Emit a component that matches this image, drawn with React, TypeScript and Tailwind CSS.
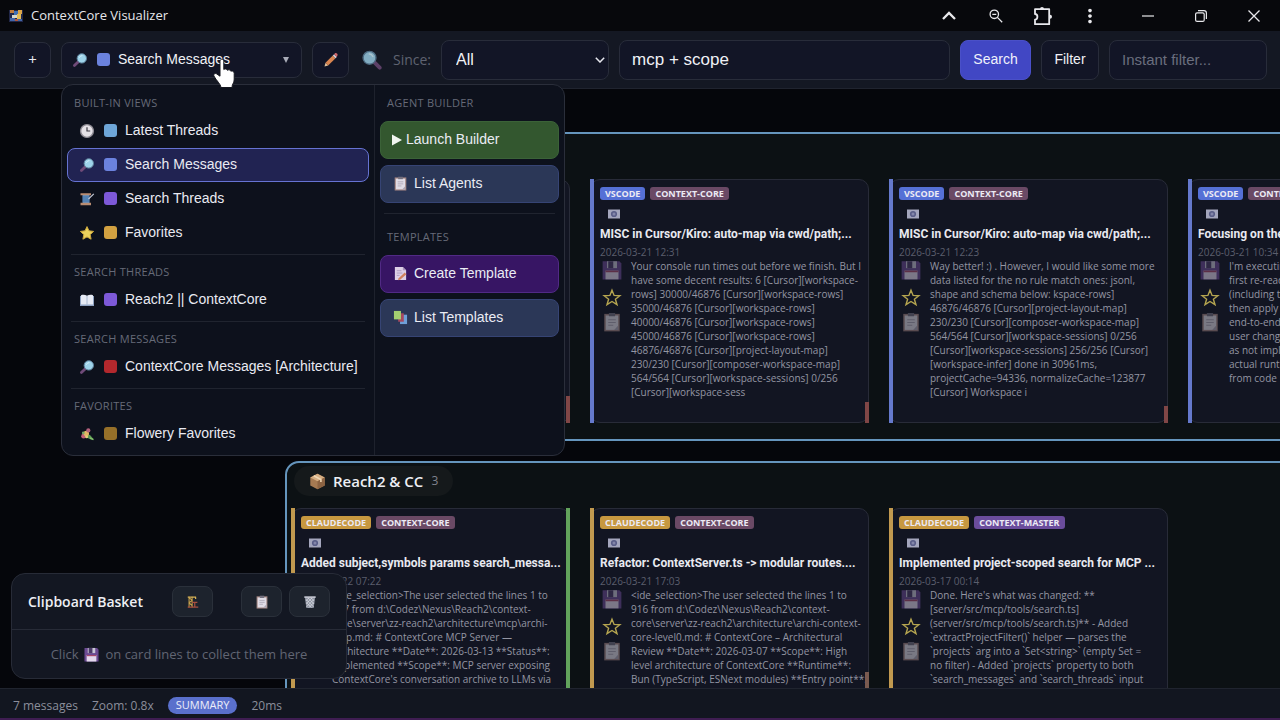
import React from "react";
import { MdMoreVert } from "react-icons/md";

type IconProps = { className?: string };

function Lens({ className = "size-4" }: IconProps) {
  return (
    <svg viewBox="0 0 16 16" className={`${className} shrink-0`} aria-hidden="true">
      <path d="M6.6 9.4 2.4 13.6" stroke="#6f4a78" strokeWidth="2.8" strokeLinecap="round" />
      <circle cx="9.8" cy="6.4" r="4.7" fill="#9ed3ea" stroke="#5c7f99" strokeWidth="1" />
      <path d="M7.4 5.4a3 3 0 0 1 2.6-1.8" stroke="#d4f0fa" strokeWidth="1" fill="none" strokeLinecap="round" />
    </svg>
  );
}

function Clock({ className = "size-4" }: IconProps) {
  return (
    <svg viewBox="0 0 16 16" className={className} aria-hidden="true">
      <circle cx="8" cy="8" r="6.4" fill="#e4e1e6" stroke="#8d8a92" strokeWidth="1.4" />
      <path d="M8 4.2V8h3.2" stroke="#3b3942" strokeWidth="1.2" fill="none" />
    </svg>
  );
}

function Spool({ className = "size-4" }: IconProps) {
  return (
    <svg viewBox="0 0 16 16" className={className} aria-hidden="true">
      <path d="M3.5 4h7v8h-7z" fill="#5c8fc4" />
      <path d="M3.5 6h7M3.5 8h7M3.5 10h7" stroke="#3f6797" strokeWidth=".7" />
      <path d="M1.5 2.2h10.5v2H1.5zM1.5 11.8h10.5v2.4H1.5z" fill="#b98d72" />
      <path d="m9.5 8 5.3-5.2" stroke="#c6cbd8" strokeWidth="1.1" />
    </svg>
  );
}

function StarSolid({ className = "size-4" }: IconProps) {
  return (
    <svg viewBox="0 0 16 16" className={className} aria-hidden="true">
      <path d="m8 1.6 2 4.2 4.6.6-3.4 3.2.9 4.6L8 11.9l-4.1 2.3.9-4.6L1.4 6.4 6 5.800z" fill="#ecd25c" stroke="#cba63c" strokeWidth="1" strokeLinejoin="round" />
    </svg>
  );
}

function Book({ className = "size-4" }: IconProps) {
  return (
    <svg viewBox="0 0 16 16" className={className} aria-hidden="true">
      <path d="M1 4h14v10H1z" fill="#8fa3c2" />
      <path d="M2 3.200c2-.6 4.400-.4 6 .6 1.600-1 4-1.200 6-.6v9.300H2z" fill="#e6ebf5" />
      <path d="M8 4v8.500" stroke="#9aabc6" strokeWidth=".8" />
    </svg>
  );
}

function Bouquet({ className = "size-4" }: IconProps) {
  return (
    <svg viewBox="0 0 16 16" className={className} aria-hidden="true">
      <path d="m7 7 4.500 2.500 2.800 3.500-2.300.6-4.500-2.100z" fill="#5f9b55" />
      <path d="m11 12 3.500 1.600" stroke="#83c26c" strokeWidth="1.400" />
      <circle cx="4.600" cy="10.200" r="2.400" fill="#c45f76" />
      <circle cx="7.300" cy="7.500" r="2.700" fill="#e4b765" />
      <circle cx="9.300" cy="4.400" r="2.100" fill="#b3607c" />
      <circle cx="4.300" cy="7" r="1.400" fill="#79a866" />
      <circle cx="7.600" cy="10.800" r="1.500" fill="#e3d07b" />
    </svg>
  );
}

function Pencil({ className = "size-4" }: IconProps) {
  return (
    <svg viewBox="0 0 16 16" className={className} aria-hidden="true">
      <path d="m1.500 14.500 1-3.700 2.700 2.700z" fill="#e2c19a" />
      <path d="m2.500 10.800 7.300-7.300 2.700 2.700-7.300 7.300z" fill="#d98550" />
      <path d="m9.800 3.500 1.300-1.300 2.700 2.700-1.300 1.300z" fill="#d5d2da" />
      <path d="m11.100 2.200.9-.9c.8-.6 1.500-.2 2 .3s.9 1.300.4 2l-.6 1.300z" fill="#d46a6e" />
    </svg>
  );
}

function Clipboard({ className = "size-4" }: IconProps) {
  return (
    <svg viewBox="0 0 16 16" className={className} aria-hidden="true">
      <path d="M1.800 1.500h12.400v14H1.800z" fill="#a28480" />
      <path d="M3 2.800h10v11.500H3z" fill="#e0dce6" />
      <path d="M5.500.8h5v2.600h-5z" fill="#73707e" />
      <path d="M5 6.200h6M5 8.400h6M5 10.600h4" stroke="#aaa5b4" strokeWidth=".9" />
      <path d="m13 10.800-3.300 3.500H13z" fill="#a9a4b3" />
    </svg>
  );
}

function Memo({ className = "size-4" }: IconProps) {
  return (
    <svg viewBox="0 0 16 16" className={className} aria-hidden="true">
      <path d="M2 1h8.500L14 4.500V15H2z" fill="#ddcfe6" />
      <path d="M10.500 1v3.500H14" fill="#ab95bd" />
      <path d="M4 5h5M4 7.500h6M4 10h3" stroke="#a996bb" strokeWidth=".9" />
      <path d="m6 13 6.500-6 1.800 1.800-6.400 5.700-2.500.6z" fill="#d0805d" />
    </svg>
  );
}

function Swatches({ className = "size-4" }: IconProps) {
  return (
    <svg viewBox="0 0 16 16" className={className} aria-hidden="true">
      <path d="M7.500 5H15v10H7.500z" fill="#6f9fd8" />
      <path d="M5.500 3.500h6v9h-6z" fill="#a6485f" />
      <path d="M1 1h7.500v9H1z" fill="#a3cf70" />
    </svg>
  );
}

function Floppy({ className = "size-4" }: IconProps) {
  return (
    <svg viewBox="0 0 16 16" className={className} aria-hidden="true">
      <path d="M.5 1h13.500l1.500 1.800V15.500H.5z" fill="#6b4a92" />
      <path d="M4 1h8v5.500H4z" fill="#c8c6d6" />
      <path d="M5 1h4v5.500H5z" fill="#4a3b66" />
      <path d="M2.800 8.500h10.400v7H2.800z" fill="#e3d8ec" />
      <path d="M2.800 8.500h10.400v1.300H2.800z" fill="#a6496b" />
    </svg>
  );
}

function Crane({ className = "size-4" }: IconProps) {
  return (
    <svg viewBox="0 0 16 16" className={className} aria-hidden="true">
      <path d="M3.500 2v12M7 2v12M3.500 3 7 6 3.500 9 7 12" stroke="#c9a24c" strokeWidth="1.200" fill="none" />
      <path d="M2 2.500h9.500M11 2.500v2" stroke="#d6b257" strokeWidth="1.400" fill="none" />
      <path d="M2 13.800h12M7 8.500h6M10 8.500v5" stroke="#a9503f" strokeWidth="1.400" />
    </svg>
  );
}

function Trash({ className = "size-4" }: IconProps) {
  return (
    <svg viewBox="0 0 16 16" className={className} aria-hidden="true">
      <path d="M2.200 2.500h11.600l-1.600 12.300H3.800z" fill="#8c92a0" />
      <path d="m3.500 5 8.500 8.500M6 3.500l6.800 6.800M9.500 3.500l3.600 3.600M3.800 8.500l5.700 5.800M12.500 5 4 13.500M10 3.500 3.600 10M6.500 3.500 3 7M12.400 8.500l-5.600 5.800" stroke="#dfe2ea" strokeWidth=".8" />
      <path d="M1.500 1.500h13v1.800h-13z" fill="#c9ccd6" />
    </svg>
  );
}

function Camera({ className = "h-3 w-3" }: IconProps) {
  return (
    <svg viewBox="0 0 12 9" className={className} aria-hidden="true">
      <path d="M0 0h12v9H0z" fill="#a4a6bd" />
      <circle cx="6" cy="4.500" r="3.100" fill="#5a5e88" />
      <circle cx="6" cy="4.500" r="1.500" fill="#8386aa" />
    </svg>
  );
}

function Box({ className = "size-4" }: IconProps) {
  return (
    <svg viewBox="0 0 16 16" className={className} aria-hidden="true">
      <path d="m8 .8 6.800 3.400v7.600L8 15.300 1.200 11.800V4.200z" fill="#a67a52" />
      <path d="m8 .8 6.800 3.400L8 7.800 1.200 4.200z" fill="#d5ad82" />
      <path d="M8 7.800v7.500l6.800-3.500V4.200z" fill="#8c6342" />
      <path d="m4.400 2.600 6.800 3.500v2.300" stroke="#efd6b3" strokeWidth="1.500" fill="none" />
    </svg>
  );
}

function StarOutline() {
  return (
    <svg viewBox="0 0 20 20" className="size-5" aria-hidden="true">
      <path d="m10 2.200 2.100 5.200 5.800.3-4.500 3.500 1.600 5.500-5-3.200-5 3.200 1.600-5.500L2.100 7.700l5.800-.3z" fill="none" stroke="#b5a550" strokeWidth="1.400" />
    </svg>
  );
}

const winIcon = "flex h-full items-center justify-center text-[#e8e8ec]";

function TitleBar() {
  return (
    <header className="flex h-[31px] shrink-0 items-center bg-[#07080c]">
      <div className="flex flex-1 items-center gap-2 pl-[9px]">
        <svg viewBox="0 0 14 14" className="size-3.5" aria-hidden="true">
          <path d="M0 1h14v12H0z" fill="#22284a" />
          <path d="M1 1h4v3H1z" fill="#c07a3a" />
          <path d="M5 2h4v4H5z" fill="#4170b5" />
          <path d="M9 1h4v4H9z" fill="#dba448" />
          <path d="M3 6h5v3H3z" fill="#d9d7c8" />
          <path d="M8 5h4v5H8z" fill="#e3bb55" />
          <path d="M1 9h5v3H1zM9 10h4v2H9z" fill="#4265a8" />
          <path d="M6 10h3v2H6z" fill="#b4573c" />
        </svg>
        <h1 className="text-[13px] text-[#e6e6ea]">ContextCore Visualizer</h1>
      </div>
      <button aria-label="Collapse" className={`${winIcon} w-[47px]`}>
        <svg viewBox="0 0 14 10" className="h-2.5 w-3.5" aria-hidden="true">
          <path d="m1 8 6-6 6 6" fill="none" stroke="currentColor" strokeWidth="2.300" />
        </svg>
      </button>
      <button aria-label="Zoom out" className={`${winIcon} w-[47px]`}>
        <svg viewBox="0 0 14 14" className="size-3.5" fill="none" stroke="currentColor" strokeWidth="1.300" aria-hidden="true">
          <circle cx="5.300" cy="5.300" r="4.200" />
          <path d="m8.400 8.400 4.800 4.800M3.300 5.300h4" />
        </svg>
      </button>
      <button aria-label="Extensions" className={`${winIcon} w-[47px]`}>
        <svg viewBox="0 0 20 20" className="size-5" aria-hidden="true">
          <path d="M2 3.200h14.200v15H2v-4.600c1.600 0 2.400-1.300 2.400-2.800S3.600 8 2 8z" fill="none" stroke="currentColor" strokeWidth="1.800" strokeLinejoin="round" />
          <path d="M7 3a2 2 0 0 1 4 0zM17 8.700a2 2 0 0 1 0 4z" fill="currentColor" />
        </svg>
      </button>
      <button aria-label="More" className={`${winIcon} w-[47px]`}>
        <MdMoreVert className="size-[22px]" />
      </button>
      <div className="flex h-full pl-2">
        <button aria-label="Minimize" className={`${winIcon} w-[53px]`}>
          <svg viewBox="0 0 12 12" className="size-3" aria-hidden="true">
            <path d="M0 6h12" stroke="currentColor" strokeWidth="1.200" />
          </svg>
        </button>
        <button aria-label="Restore" className={`${winIcon} w-[53px]`}>
          <svg viewBox="0 0 12 12" className="size-3" fill="none" stroke="currentColor" strokeWidth="1.200" aria-hidden="true">
            <rect x=".6" y="2.800" width="8.600" height="8.600" rx="1.500" />
            <path d="M3 .7h6A2.400 2.400 0 0 1 11.400 3v6" />
          </svg>
        </button>
        <button aria-label="Close" className={`${winIcon} w-[53px]`}>
          <svg viewBox="0 0 12 12" className="size-3" aria-hidden="true">
            <path d="m.5.5 11 11M11.500.5.5 11.500" stroke="currentColor" strokeWidth="1.300" />
          </svg>
        </button>
      </div>
    </header>
  );
}

const field = "rounded-[8px] border border-[#282c3a] bg-[#121526]";

function ViewLabel({ icon, color, name }: { icon: React.ReactNode; color: string; name: string }) {
  return (
    <>
      {icon}
      <span className={`ml-[9px] size-[13px] shrink-0 rounded-[3px] ${color}`} />
      <span className="ml-2 whitespace-nowrap">{name}</span>
    </>
  );
}

function MenuItem({ icon, color, name, active }: { icon: React.ReactNode; color: string; name: string; active?: boolean }) {
  return (
    <button
      className={`flex h-[34px] w-full items-center rounded-[8px] border pl-[11px] text-[14px] text-[#e9eaf2] ${
        active ? "border-[#6673d2] bg-[#212352]" : "border-transparent"
      }`}
    >
      <ViewLabel icon={icon} color={color} name={name} />
    </button>
  );
}

function MenuHeading({ children }: { children: React.ReactNode }) {
  return (
    <h2 className="flex h-6 items-center pt-1 pl-[7px] font-['Open_Sans',sans-serif] text-[11px] tracking-wide text-[#666a78] uppercase">
      {children}
    </h2>
  );
}

function ActionButton({ icon, label, tone }: { icon: React.ReactNode; label: string; tone: string }) {
  return (
    <button className={`flex h-[38px] w-full items-center rounded-[8px] border text-[14px] text-[#eaecf4] ${tone}`}>
      {icon}
      {label}
    </button>
  );
}

function ViewMenu() {
  const line = "mx-1 my-1 h-px border-0 bg-[#20242f]";
  return (
    <div className="absolute top-[42px] left-0 z-30 flex h-[372px] rounded-[12px] border border-[#2a2e3a] bg-[#0d111c]">
      <div className="w-[312px] px-[5px] pt-[5px]">
        <MenuHeading>Built-in views</MenuHeading>
        <MenuItem icon={<Clock />} color="bg-[#6ea6d8]" name="Latest Threads" />
        <MenuItem icon={<Lens />} color="bg-[#6b82de]" name="Search Messages" active />
        <MenuItem icon={<Spool />} color="bg-[#7d59d8]" name="Search Threads" />
        <MenuItem icon={<StarSolid />} color="bg-[#d2a141]" name="Favorites" />
        <hr className={line} />
        <MenuHeading>Search threads</MenuHeading>
        <MenuItem icon={<Book />} color="bg-[#7d59d8]" name="Reach2 || ContextCore" />
        <hr className={line} />
        <MenuHeading>Search messages</MenuHeading>
        <MenuItem icon={<Lens />} color="bg-[#b3282d]" name="ContextCore Messages [Architecture]" />
        <hr className={line} />
        <MenuHeading>Favorites</MenuHeading>
        <MenuItem icon={<Bouquet />} color="bg-[#967029]" name="Flowery Favorites" />
      </div>
      <div className="w-[190px] border-l border-[#1e222d] px-[5px] pt-[5px]">
        <MenuHeading>Agent builder</MenuHeading>
        <div className="mt-[7px] flex flex-col gap-1.5">
          <ActionButton
            tone="border-[#3b6238] bg-[#33572f] pl-[11px] gap-1"
            label="Launch Builder"
            icon={
              <svg viewBox="0 0 10 12" className="h-3 w-2.5" aria-hidden="true">
                <path d="M0 .5 10 6 0 11.500z" fill="#f1f5f0" />
              </svg>
            }
          />
          <ActionButton tone="border-[#364474] bg-[#2b3757] pl-3 gap-1.5" label="List Agents" icon={<Clipboard className="size-[15px]" />} />
        </div>
        <hr className="mx-1 my-2.5 h-px border-0 bg-[#20242f]" />
        <MenuHeading>Templates</MenuHeading>
        <div className="mt-[7px] flex flex-col gap-1.5">
          <ActionButton tone="border-[#512a85] bg-[#371564] pl-3 gap-1.5" label="Create Template" icon={<Memo className="size-[15px]" />} />
          <ActionButton tone="border-[#364474] bg-[#2b3757] pl-3 gap-1.5" label="List Templates" icon={<Swatches className="size-[15px]" />} />
        </div>
      </div>
    </div>
  );
}

function Toolbar() {
  return (
    <div className="flex h-[58px] shrink-0 items-center gap-2.5 border-b border-[#20242f] bg-[#141823] pr-[13px] pl-3.5">
      <button aria-label="Add view" className={`${field} h-9 w-[37px] text-[15px] text-[#e9eaf2]`}>
        +
      </button>
      <div className="relative font-['Liberation_Sans',sans-serif]">
        <button aria-expanded="true" className={`${field} flex h-9 w-[241px] items-center pl-[10px] text-[14px] text-[#f0f1f6]`}>
          <ViewLabel icon={<Lens />} color="bg-[#6b82de]" name="Search Messages" />
          <svg viewBox="0 0 6 6" className="mr-3 ml-auto size-1.5" aria-hidden="true">
            <path d="M0 0h6L3 6z" fill="#a9acb8" />
          </svg>
        </button>
        <ViewMenu />
        <svg viewBox="0 0 24 31" className="absolute top-4 left-[151px] z-40 h-[31px] w-6" aria-hidden="true">
          <path
            d="M8 3.200c0-1.300.9-2 1.900-2s1.900.7 1.900 2v8.300c.3-.8 3.300-.9 3.600.8.600-.9 3.300-.6 3.500 1 .8-.8 3.300-.4 3.300 2v5.800c0 3.200-1.300 4.500-1.900 6.200-.2.800-.2 1.400-.2 2.200H8.900c-.2-3.500-4-6.200-6.900-11.400-.9-1.700.9-3.400 2.900-2.100L8 18.200z"
            fill="#fff"
            stroke="#15171f"
            strokeWidth="1"
          />
        </svg>
      </div>
      <button aria-label="Edit view" className={`${field} flex h-9 w-[37px] items-center justify-center`}>
        <Pencil />
      </button>
      <div className="flex items-center gap-2.5 pl-0.5">
        <Lens className="size-[22px] -scale-x-100 opacity-80" />
        <label htmlFor="since" className="text-[14px] text-[#5f6371]">
          Since:
        </label>
      </div>
      <div className="relative font-['Liberation_Sans',sans-serif]">
        <select id="since" className={`${field} h-10 w-[168px] appearance-none pl-3.5 text-[16px] text-[#f0f1f6]`}>
          <option>All</option>
        </select>
        <svg viewBox="0 0 10 6" className="pointer-events-none absolute top-[17px] right-1 h-1.5 w-2.5" aria-hidden="true">
          <path d="m.8.8 4.200 4.200L9.200.8" fill="none" stroke="#e6e7ee" strokeWidth="1.500" />
        </svg>
      </div>
      <input
        aria-label="Search query"
        defaultValue="mcp + scope"
        className={`${field} h-10 min-w-0 flex-1 px-3 font-['Liberation_Sans',sans-serif] text-[17px] text-[#f0f1f6]`}
      />
      <button className="h-10 w-[71px] rounded-[8px] border border-[#4a50c8] bg-[#4147c4] font-['Liberation_Sans',sans-serif] text-[14px] text-[#f0f1fb]">
        Search
      </button>
      <button className={`${field} h-10 w-[58px] font-['Liberation_Sans',sans-serif] text-[14px] text-[#f0f1f6]`}>Filter</button>
      <input
        aria-label="Instant filter"
        placeholder="Instant filter..."
        className={`${field} h-10 w-[158px] px-3 font-['Liberation_Sans',sans-serif] text-[15px] text-[#f0f1f6] placeholder:text-[#6a6e7e]`}
      />
    </div>
  );
}

type Card = {
  source: string;
  project?: string;
  title: string;
  date: string;
  body: string;
  bar?: string;
};

const sourceTag: Record<string, string> = { VSCODE: "bg-[#5570d6]", CLAUDECODE: "bg-[#c79840]" };
const stripe: Record<string, string> = { VSCODE: "bg-[#6579cc]", CLAUDECODE: "bg-[#c1994f]" };
const projectTag: Record<string, string> = { "CONTEXT-CORE": "bg-[#6a4965]", "CONTEXT-MASTER": "bg-[#6a4c9c]" };

const threads: Card[] = [
  { source: "VSCODE", title: "", date: "", body: "", bar: "h-[27px] bg-[#804646]" },
  {
    source: "VSCODE",
    project: "CONTEXT-CORE",
    title: "MISC in Cursor/Kiro: auto-map via cwd/path;...",
    date: "2026-03-21 12:31",
    body: "Your console run times out before we finish. But I\nhave some decent results: 6 [Cursor][workspace-\nrows] 30000/46876 [Cursor][workspace-rows]\n35000/46876 [Cursor][workspace-rows]\n40000/46876 [Cursor][workspace-rows]\n45000/46876 [Cursor][workspace-rows]\n46876/46876 [Cursor][project-layout-map]\n230/230 [Cursor][composer-workspace-map]\n564/564 [Cursor][workspace-sessions] 0/256\n[Cursor][workspace-sess",
    bar: "h-[21px] bg-[#804646]",
  },
  {
    source: "VSCODE",
    project: "CONTEXT-CORE",
    title: "MISC in Cursor/Kiro: auto-map via cwd/path;...",
    date: "2026-03-21 12:23",
    body: "Way better! :) . However, I would like some more\ndata listed for the no rule match ones: jsonl,\nshape and schema below: kspace-rows]\n46876/46876 [Cursor][project-layout-map]\n230/230 [Cursor][composer-workspace-map]\n564/564 [Cursor][workspace-sessions] 0/256\n[Cursor][workspace-sessions] 256/256 [Cursor]\n[workspace-infer] done in 30961ms,\nprojectCache=94336, normalizeCache=123877\n[Cursor] Workspace i",
    bar: "h-[17px] bg-[#804646]",
  },
  {
    source: "VSCODE",
    project: "CONTEXT-CORE",
    title: "Focusing on the",
    date: "2026-03-21 10:34",
    body: "I'm executing\nfirst re-read\n(including the\nthen apply\nend-to-end\nuser changes\nas not implem\nactual runtime\nfrom code",
  },
];

const reach: Card[] = [
  {
    source: "CLAUDECODE",
    project: "CONTEXT-CORE",
    title: "Added subject,symbols params search_messa...",
    date: "2026-03-22 07:22",
    body: "<ide_selection>The user selected the lines 1 to\n917 from d:\\Codez\\Nexus\\Reach2\\context-\ncore\\server\\zz-reach2\\architecture\\mcp\\archi-\nmcp.md: # ContextCore MCP Server —\nArchitecture **Date**: 2026-03-13 **Status**:\nImplemented **Scope**: MCP server exposing\nContextCore's conversation archive to LLMs via\nthe Model Context Protocol (MCP)",
    bar: "h-[244px] bg-[#62a35c]",
  },
  {
    source: "CLAUDECODE",
    project: "CONTEXT-CORE",
    title: "Refactor: ContextServer.ts -> modular routes....",
    date: "2026-03-21 17:03",
    body: "<ide_selection>The user selected the lines 1 to\n916 from d:\\Codez\\Nexus\\Reach2\\context-\ncore\\server\\zz-reach2\\architecture\\archi-context-\ncore-level0.md: # ContextCore – Architectural\nReview **Date**: 2026-03-07 **Scope**: High\nlevel architecture of ContextCore **Runtime**:\nBun (TypeScript, ESNext modules) **Entry point**:\nbun run start",
    bar: "h-20 bg-[#7a5a50]",
  },
  {
    source: "CLAUDECODE",
    project: "CONTEXT-MASTER",
    title: "Implemented project-scoped search for MCP ...",
    date: "2026-03-17 00:14",
    body: "Done. Here's what was changed: **\n[server/src/mcp/tools/search.ts]\n(server/src/mcp/tools/search.ts)** - Added\n`extractProjectFilter()` helper — parses the\n`projects` arg into a `Set<string>` (empty Set =\nno filter) - Added `projects` property to both\n`search_messages` and `search_threads` input\nschemas, updated the filter",
  },
];

function MessageCard({ card }: { card: Card }) {
  const tag = "flex h-[13px] items-center rounded-[3px] px-[5px] text-[9px] font-bold text-[#eceaf4]";
  return (
    <article className="relative h-[244px] w-[279px] rounded-[10px] border border-[#282b38] bg-[#121522] pt-[7px] pr-1 pl-[9px]">
      <span className={`absolute -inset-y-px -left-px w-1 ${stripe[card.source]}`} />
      {card.bar && <span className={`absolute -right-px -bottom-px w-1 ${card.bar}`} />}
      {card.project && (
        <>
          <div className="flex gap-[5px]">
            <span className={`${tag} ${sourceTag[card.source]}`}>{card.source}</span>
            <span className={`${tag} ${projectTag[card.project]}`}>{card.project}</span>
          </div>
          <div className="mt-1 flex h-5 items-center pl-2">
            <Camera />
          </div>
          <h3 className="font-['Roboto',sans-serif] text-[12px] leading-[20px] font-bold whitespace-nowrap text-[#e8e9f0]">{card.title}</h3>
          <time className="mt-0.5 block text-[10px] leading-[13px] text-[#5b5e6d]">{card.date}</time>
          <div className="flex gap-[7px]">
            <div className="flex w-6 shrink-0 flex-col items-center">
              <button aria-label="Collect" className="mt-px opacity-50">
                <Floppy className="size-5" />
              </button>
              <button aria-label="Favorite" className="mt-2">
                <StarOutline />
              </button>
              <button aria-label="Copy" className="mt-1 opacity-50">
                <Clipboard className="size-5" />
              </button>
            </div>
            <p className="text-[10px] leading-[14px] whitespace-pre text-[#9496a3]">{card.body}</p>
          </div>
        </>
      )}
    </article>
  );
}

function Group({ title, count, cards }: { title?: string; count?: number; cards: Card[] }) {
  return (
    <section className="rounded-[14px] border-2 border-[#6595bd] bg-[#0c1114] px-1 pt-[3px] pb-4">
      <div className="mb-3 flex h-[30px] pl-[3px]">
        {title && (
          <h2 className="flex items-center rounded-full bg-[#15191b] px-[15px] text-[15px] font-semibold text-[#eeeff4]">
            <Box className="mr-[7px] size-[17px]" />
            {title}
            <span className="ml-2 text-[12px] font-normal text-[#80838e]">{count}</span>
          </h2>
        )}
      </div>
      <div className="flex gap-5">
        {cards.map((card, i) => (
          <MessageCard key={i} card={card} />
        ))}
      </div>
    </section>
  );
}

function ClipboardBasket() {
  const btn = "flex h-[31px] w-[41px] items-center justify-center rounded-[8px] border border-[#2a303a] bg-[#1d232d]";
  return (
    <aside className="absolute bottom-[9px] left-[11px] z-20 w-[336px] rounded-[14px] border border-[#272b37] bg-[#131722]">
      <div className="flex h-14 items-center border-b border-[#272b37] px-4">
        <h2 className="text-[14px] font-semibold text-[#eeeff4]">Clipboard Basket</h2>
        <div className="ml-auto flex">
          <button aria-label="Build" className={`${btn} mr-7`}>
            <Crane className="size-3.5" />
          </button>
          <button aria-label="Copy all" className={`${btn} mr-[7px]`}>
            <Clipboard className="size-3.5" />
          </button>
          <button aria-label="Clear" className={btn}>
            <Trash className="size-3.5" />
          </button>
        </div>
      </div>
      <p className="flex h-12 items-center justify-center gap-1.5 pt-px text-[13px] text-[#616573]">
        Click <Floppy className="size-[15px]" /> on card lines to collect them here
      </p>
    </aside>
  );
}

export default function App() {
  return (
    <div className="flex h-screen flex-col overflow-hidden bg-[#05060b] font-['Open_Sans',sans-serif]">
      <TitleBar />
      <Toolbar />
      <div className="relative min-h-0 flex-1">
        <main className="h-full overflow-hidden pt-[43px] pl-[285px]">
          <div className="flex w-max flex-col gap-5">
            <Group cards={threads} />
            <Group title="Reach2 & CC" count={3} cards={reach} />
          </div>
        </main>
        <ClipboardBasket />
      </div>
      <footer className="flex h-8 shrink-0 items-center gap-3.5 border-t border-b-2 border-t-[#20242f] border-b-[#3f1d52] bg-[#121620] px-[13px] pt-1 text-[12px] text-[#8b8e9b]">
        <span>7 messages</span>
        <span>Zoom: 0.8x</span>
        <span className="flex h-[17px] items-center rounded-full bg-[#5a70cc] px-2 text-[11px] text-[#eceefa]">SUMMARY</span>
        <span>20ms</span>
      </footer>
    </div>
  );
}
